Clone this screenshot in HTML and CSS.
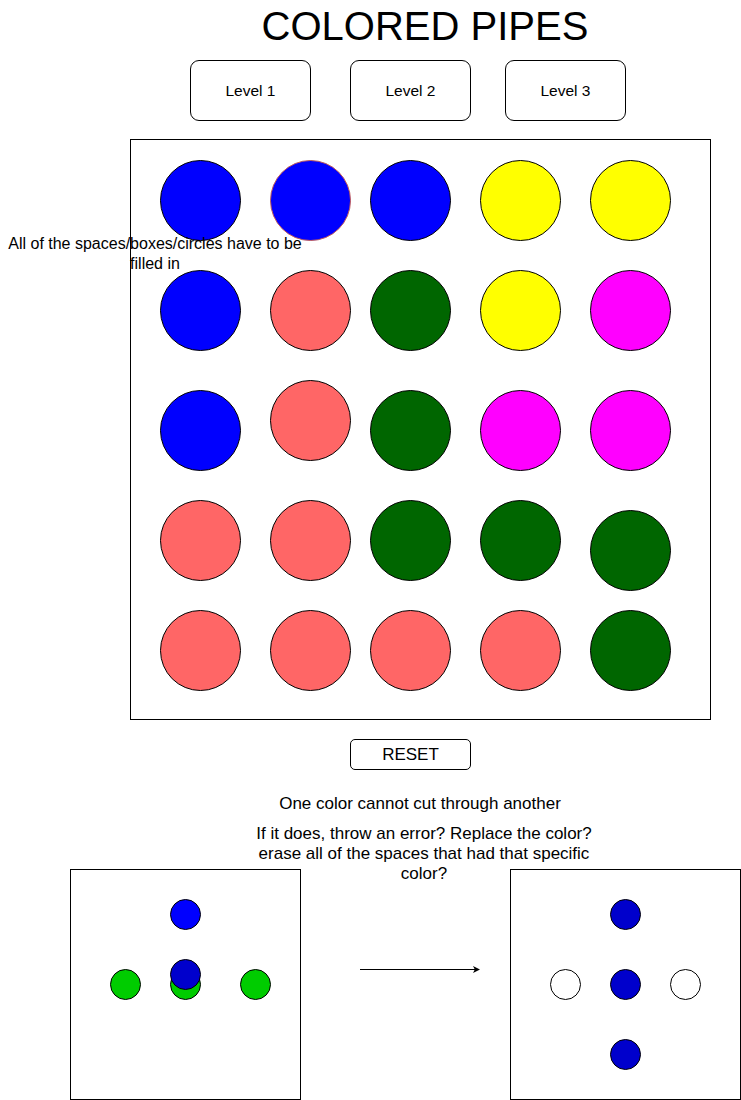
FILE: index.html
```html
<!DOCTYPE html>
<html lang="en">
<head>
<meta charset="utf-8">
<title>Colored Pipes</title>
<link rel="stylesheet" href="styles.css">
</head>
<body>
<div class="page">
  <h1 class="title">COLORED PIPES</h1>
  <div class="levels">
    <button class="btn level">Level 1</button>
    <button class="btn level">Level 2</button>
    <button class="btn level level-3">Level 3</button>
  </div>

  <div class="board">
    <span class="dot blue"></span>
    <span class="dot blue red-edge"></span>
    <span class="dot blue"></span>
    <span class="dot yellow"></span>
    <span class="dot yellow"></span>

    <span class="dot blue"></span>
    <span class="dot salmon"></span>
    <span class="dot green"></span>
    <span class="dot yellow"></span>
    <span class="dot magenta"></span>

    <span class="dot blue"></span>
    <span class="dot salmon up"></span>
    <span class="dot green"></span>
    <span class="dot magenta"></span>
    <span class="dot magenta"></span>

    <span class="dot salmon"></span>
    <span class="dot salmon"></span>
    <span class="dot green"></span>
    <span class="dot green"></span>
    <span class="dot green down"></span>

    <span class="dot salmon"></span>
    <span class="dot salmon"></span>
    <span class="dot salmon"></span>
    <span class="dot salmon"></span>
    <span class="dot green"></span>
  </div>

  <p class="note">All of the spaces/boxes/circles have to be filled in</p>

  <button class="btn reset">RESET</button>

  <p class="caption">One color cannot cut through another</p>
  <p class="question">If it does, throw an error? Replace the color? erase all of the spaces that had that specific color?</p>

  <div class="diagrams">
    <div class="mini">
      <span class="pin p-top bright-blue"></span>
      <span class="pin p-left lime"></span>
      <span class="pin p-mid lime"></span>
      <span class="pin p-right-a lime"></span>
      <span class="pin p-lift navy"></span>
    </div>
    <svg class="arrow" viewBox="0 0 120 10" aria-hidden="true">
      <line x1="0" y1="5.5" x2="115" y2="5.5" stroke="#000" stroke-width="1"/>
      <path d="M120 5.5 L113 2 L114.8 5.5 L113 9 Z" fill="#000"/>
    </svg>
    <div class="mini">
      <span class="pin p-top navy"></span>
      <span class="pin p-left empty"></span>
      <span class="pin p-mid navy"></span>
      <span class="pin p-right-b empty"></span>
      <span class="pin p-bottom navy"></span>
    </div>
  </div>
</div>
</body>
</html>
```

FILE: styles.css
```css
* {
  box-sizing: border-box;
}

body {
  margin: 0;
  background: #fff;
  color: #000;
  font-family: "Liberation Sans", Arial, Helvetica, sans-serif;
}

.page {
  position: relative;
  width: 741px;
  height: 1100px;
  overflow: hidden;
}

.title {
  margin: 0 0 0 135px;
  padding-top: 3px;
  width: 580px;
  text-align: center;
  font-size: 40px;
  font-weight: 400;
  line-height: 46px;
}

.levels {
  display: flex;
  gap: 39px;
  margin: 11px 0 0 190px;
}

.btn {
  display: flex;
  align-items: center;
  justify-content: center;
  padding: 0;
  background: #fff;
  color: #000;
  border: 1px solid #000;
  font-family: inherit;
}

.level {
  width: 121px;
  height: 61px;
  border-radius: 9px;
  font-size: 15.5px;
}

.level-3 {
  margin-left: -5px;
}

.board {
  display: grid;
  grid-template-columns: 110px 100px 110px 110px 81px;
  grid-template-rows: 110px 120px 110px 110px 81px;
  width: 581px;
  height: 581px;
  margin: 18px 0 0 130px;
  padding: 20px 0 0 29px;
  border: 1px solid #000;
}

.dot {
  display: block;
  width: 81px;
  height: 81px;
  border-radius: 50%;
  border: 1px solid #000;
}

.up {
  margin-top: -10px;
}

.down {
  margin-top: 10px;
}

.blue { background: #0000ff; }
.yellow { background: #ffff00; }
.salmon { background: #ff6666; }
.green { background: #006600; }
.magenta { background: #ff00ff; }
.red-edge { border-color: #c05a5a; }

.note {
  position: absolute;
  left: 0;
  top: 234px;
  width: 310px;
  margin: 0;
  text-align: center;
  font-size: 16px;
  line-height: 20px;
}

.reset {
  width: 121px;
  height: 31px;
  margin: 19px 0 0 350px;
  border-radius: 5px;
  font-size: 17px;
}

.caption {
  width: 400px;
  margin: 24px 0 0 220px;
  text-align: center;
  font-size: 17px;
  line-height: 20px;
}

.question {
  width: 360px;
  margin: 10px 0 0 244px;
  text-align: center;
  font-size: 17px;
  line-height: 20px;
}

.diagrams {
  display: flex;
  align-items: flex-start;
  margin: -15px 0 0 70px;
}

.mini {
  position: relative;
  flex: none;
  width: 231px;
  height: 231px;
  border: 1px solid #000;
}

.mini + .arrow + .mini {
  margin-left: 30px;
}

.arrow {
  flex: none;
  width: 120px;
  height: 10px;
  margin: 95px 0 0 59px;
}

.pin {
  position: absolute;
  width: 31px;
  height: 31px;
  border-radius: 50%;
  border: 1px solid #000;
}

.p-top { left: 99px; top: 29px; }
.p-left { left: 39px; top: 99px; }
.p-mid { left: 99px; top: 99px; }
.p-right-a { left: 169px; top: 99px; }
.p-right-b { left: 159px; top: 99px; }
.p-bottom { left: 99px; top: 169px; }
.p-lift { left: 99px; top: 89px; }

.bright-blue { background: #0000ff; }
.lime { background: #00cc00; }
.navy { background: #0000cc; }
.empty { background: #fff; }
```
